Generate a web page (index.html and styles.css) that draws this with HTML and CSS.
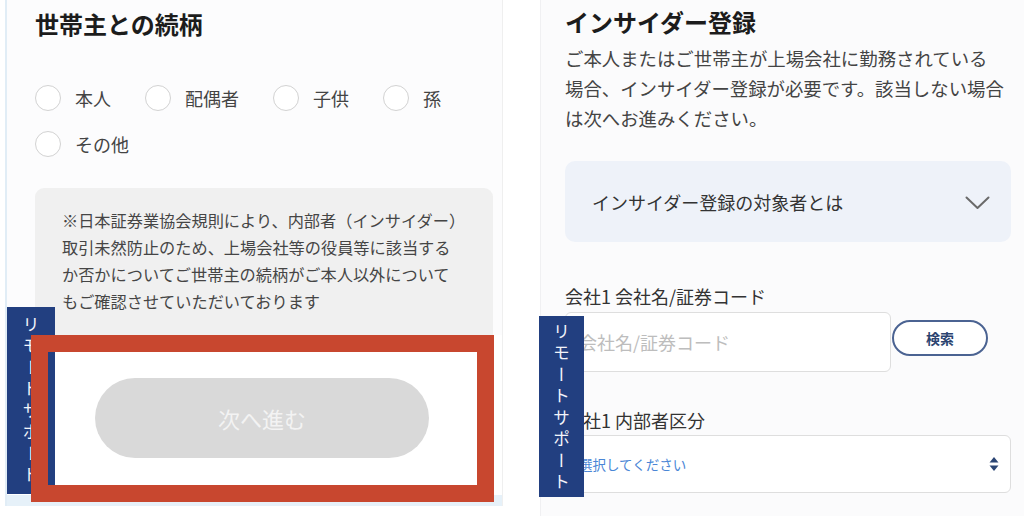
FILE: index.html
```html
<!DOCTYPE html>
<html lang="ja">
<head>
    <meta charset="UTF-8">
    <meta name="viewport" content="width=device-width, initial-scale=1.0">
    <title>世帯主との続柄 / インサイダー登録</title>
    <link rel="stylesheet" href="styles.css">
</head>
<body>
    <div class="sheet sheet-left">
        <div class="sheet-top">
            <h2 class="title">世帯主との続柄</h2>
            <div class="radios">
                <label class="radio"><span class="dot"></span>本人</label>
                <label class="radio"><span class="dot"></span>配偶者</label>
                <label class="radio"><span class="dot"></span>子供</label>
                <label class="radio"><span class="dot"></span>孫</label>
                <label class="radio"><span class="dot"></span>その他</label>
            </div>
            <div class="note">
                ※日本証券業協会規則により、内部者（インサイダー）<br>
                取引未然防止のため、上場会社等の役員等に該当する<br>
                か否かについてご世帯主の続柄がご本人以外について<br>
                もご確認させていただいております
            </div>
        </div>
        <div class="sheet-foot">
            <button class="next" disabled>次へ進む</button>
        </div>
        <div class="strip"></div>
        <div class="support support-left">リモートサポート</div>
        <div class="highlight"></div>
    </div>

    <div class="sheet sheet-right">
        <h2 class="title">インサイダー登録</h2>
        <p class="lead">
            ご本人またはご世帯主が上場会社に勤務されている<br>
            場合、インサイダー登録が必要です。該当しない場合<br>
            は次へお進みください。
        </p>
        <div class="accordion">
            <span>インサイダー登録の対象者とは</span>
            <svg width="25" height="14" viewBox="0 0 25 14">
                <path d="M1.5 1.5 L12.5 12 L23.5 1.5" fill="none" stroke="#6a6a6a" stroke-width="2" stroke-linecap="round" stroke-linejoin="round"/>
            </svg>
        </div>
        <div class="field-label">会社1 会社名/証券コード</div>
        <div class="search-row">
            <input class="text-input" type="text" placeholder="会社名/証券コード">
            <button class="search">検索</button>
        </div>
        <div class="field-label label-two">会社1 内部者区分</div>
        <div class="select">
            <span>選択してください</span>
            <svg width="10" height="16" viewBox="0 0 10 16">
                <path d="M5 1 L9.5 6.5 H0.5 Z" fill="#2b4574"/>
                <path d="M5 15 L9.5 9.5 H0.5 Z" fill="#2b4574"/>
            </svg>
        </div>
        <div class="support support-right">リモートサポート</div>
    </div>
</body>
</html>
```

FILE: styles.css
```css
html, body {
    margin: 0;
    padding: 0;
}
body {
    font-family: "Noto Sans CJK JP", "Noto Sans", sans-serif;
    background-color: #ffffff;
    display: flex;
    width: 1024px;
    height: 516px;
    overflow: hidden;
    color: #444;
}
.sheet {
    position: relative;
    box-sizing: border-box;
}
.title {
    margin: 0;
    font-size: 24px;
    line-height: 28px;
    font-weight: bold;
    color: #1c1c1c;
}

/* left sheet */
.sheet-left {
    margin-left: 5px;
    width: 498px;
    height: 506px;
    border-left: 2px solid #e1edf6;
    border-right: 1px solid #efefef;
    display: flex;
    flex-direction: column;
}
.sheet-top {
    background-color: #fcfcfd;
    padding: 10px 8px 0 28px;
}
.radios {
    display: flex;
    flex-wrap: wrap;
    column-gap: 34px;
    row-gap: 19px;
    margin-top: 46px;
    width: 440px;
}
.radio {
    display: flex;
    align-items: center;
    gap: 14px;
    height: 27px;
    font-size: 18px;
    color: #444;
}
.dot {
    width: 24px;
    height: 24px;
    border: 1.5px solid #d2d2d2;
    border-radius: 50%;
    background-color: #fff;
}
.note {
    margin-top: 31px;
    width: 458px;
    height: 147px;
    box-sizing: border-box;
    padding: 19px 10px 0 27px;
    background-color: #f0f0f0;
    border-radius: 9px 9px 0 0;
    font-size: 16.2px;
    line-height: 27px;
    color: #454545;
    white-space: nowrap;
}
.sheet-foot {
    background-color: #fff;
    height: 160px;
}
.next {
    display: block;
    margin: 43px 0 0 88px;
    width: 334px;
    height: 80px;
    border: none;
    border-radius: 40px;
    background-color: #d9d9d9;
    color: #f3f3f3;
    font-family: inherit;
    font-size: 22px;
}
.strip {
    height: 11px;
    background-color: #e6f1f9;
}
.highlight {
    position: absolute;
    left: 24px;
    top: 335px;
    width: 463px;
    height: 167px;
    box-sizing: border-box;
    border: 17px solid #c8472f;
    z-index: 3;
}

/* remote support tab */
.support {
    position: absolute;
    z-index: 2;
    background-color: #223f80;
    color: #f2f4fa;
    writing-mode: vertical-rl;
    font-size: 17px;
    letter-spacing: 4.5px;
    line-height: 1;
    display: flex;
    align-items: center;
    justify-content: flex-start;
    box-sizing: border-box;
}
.support-left {
    left: 0;
    top: 307px;
    width: 48px;
    height: 187px;
    padding-top: 9px;
}
.support-right {
    left: -2px;
    top: 316px;
    width: 45px;
    height: 181px;
    padding-top: 7px;
}

/* right sheet */
.sheet-right {
    margin-left: 37px;
    width: 484px;
    height: 516px;
    background-color: #fbfbfc;
    border-left: 1px solid #f0f0f2;
    padding: 8px 13px 0 24px;
}
.right-title {
    font-size: 23.5px;
}
.lead {
    margin: 7px 0 0 0;
    font-size: 18.4px;
    line-height: 30px;
    color: #444;
    white-space: nowrap;
}
.accordion {
    margin-top: 28px;
    height: 81px;
    border-radius: 10px;
    background-color: #eef2f9;
    display: flex;
    align-items: center;
    justify-content: space-between;
    padding: 0 21px 0 27px;
    font-size: 18px;
    color: #333;
}
.accordion svg {
    margin-top: 2px;
}
.field-label {
    margin-top: 42px;
    font-size: 18px;
    line-height: 24px;
    color: #333;
}
.label-two {
    margin-top: 36px;
}
.search-row {
    display: flex;
    margin-top: 4px;
}
.text-input {
    width: 326px;
    height: 60px;
    box-sizing: border-box;
    border: 1px solid #dedede;
    border-radius: 6px;
    background-color: #fff;
    padding: 0 13px;
    font-family: inherit;
    font-size: 18px;
    color: #333;
    outline: none;
}
.text-input::placeholder {
    color: #bdbdbd;
}
.search {
    margin: 8px 0 0 1px;
    width: 96px;
    height: 36px;
    border: 2px solid #4b6392;
    border-radius: 18px;
    background-color: #fff;
    color: #2c4470;
    font-family: inherit;
    font-size: 14px;
    font-weight: bold;
}
.select {
    margin-top: 3px;
    height: 58px;
    box-sizing: border-box;
    border: 1px solid #dedede;
    border-radius: 6px;
    background-color: #fff;
    display: flex;
    align-items: center;
    justify-content: space-between;
    padding: 0 11px 0 13px;
    font-size: 13.5px;
    color: #4a86d6;
}
```
